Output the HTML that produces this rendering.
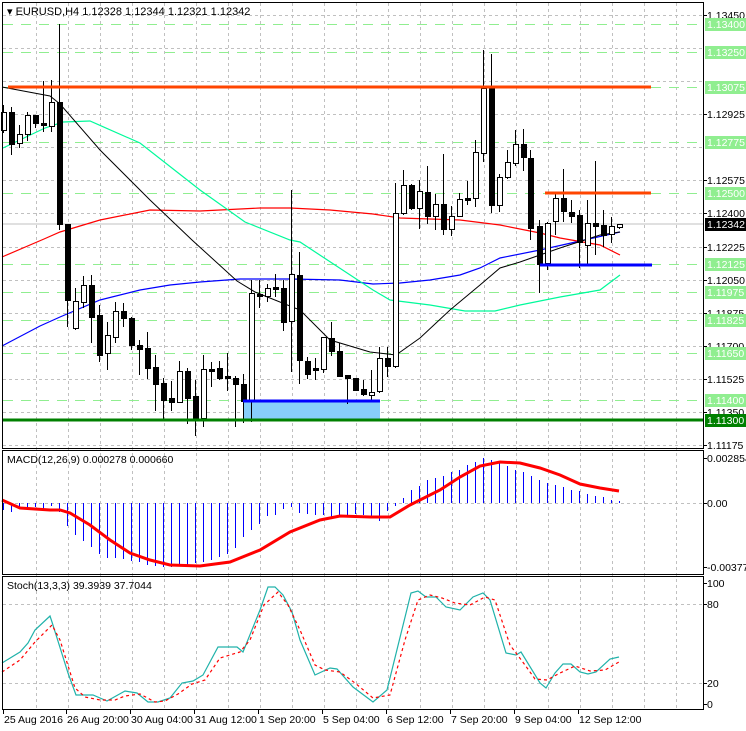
<!DOCTYPE html>
<html><head><meta charset="utf-8"><style>
html,body{margin:0;padding:0;background:#fff;width:746px;height:731px;overflow:hidden}
svg{display:block;font-family:"Liberation Sans",sans-serif;font-size:10.5px}
</style></head><body>
<svg id="s" width="746" height="731" viewBox="0 0 746 731" xmlns="http://www.w3.org/2000/svg" shape-rendering="crispEdges">
<rect width="746" height="731" fill="#fff"/>
<g id="grid" stroke="#c0c0c0" stroke-dasharray="3,3"></g>
<g id="green" stroke="#90ee90" stroke-dasharray="10,8"></g>
<line x1="3" y1="224" x2="703" y2="224" stroke="#c0c0c0"/>
<rect x="243" y="401" width="137" height="19" fill="#87cefa"/>
<g fill="none" shape-rendering="auto">
<polyline stroke="#0000ff" stroke-width="1.2" points="2,346 40,326 60,317 100,300 140,290 170,285 200,282 240,279 290,279 340,280 373,284 400,283 430,280 460,275 480,268 500,258 540,250 580,241 620,232"/>
<polyline stroke="#ff0000" stroke-width="1.2" points="2,257 44,239 60,232 100,220 150,210 200,211 260,208 290,208 330,210 373,214 400,218 460,220 500,225 540,233 560,238 600,245 620,255"/>
<polyline stroke="#00fa9a" stroke-width="1.2" points="3,148 45,128 63,122 90,121 140,143 200,190 245,222 290,240 300,242 373,290 390,300 430,305 465,311 495,311 520,305 560,297 600,290 620,275"/>
<polyline stroke="#000" stroke-width="1" points="2,87 50,96 60,104 100,150 150,200 192,240 237,281 255,292 300,310 330,340 370,352 396,355 420,338 450,310 480,285 500,268 520,262 540,255 560,248 600,235 620,232"/>
</g>
<g id="candles"></g>
<line x1="8" y1="87" x2="651" y2="87" stroke="#ff4500" stroke-width="3"/>
<line x1="545" y1="193" x2="651" y2="193" stroke="#ff4500" stroke-width="3"/>
<line x1="540" y1="265" x2="652" y2="265" stroke="#0000ff" stroke-width="3"/>
<line x1="243" y1="401" x2="380" y2="401" stroke="#0000ff" stroke-width="3"/>
<line x1="3" y1="420" x2="703" y2="420" stroke="#008000" stroke-width="3"/>
<!-- MACD -->
<g id="macd" stroke="#0000ff"></g>
<polyline fill="none" shape-rendering="auto" stroke="#ff0000" stroke-width="3" points="2,500 20,508 50,510 60,510 70,513 90,525 110,540 130,553 150,560 170,565 200,566 230,562 260,550 290,532 320,520 340,516 370,517 390,517 410,505 440,490 460,477 480,466 500,462 520,463 540,468 560,475 580,484 600,488 619,491"/>
<!-- Stoch -->
<polyline id="st" fill="none" shape-rendering="auto" stroke="#20b2aa" stroke-width="1.2" points="2,663 20,652 28,643 35,630 50,616 52,622 68,673 76,695 93,695 107,701 125,691 137,693 148,702 158,702 170,698 182,683 193,681 203,675 218,647 237,647 243,652 260,610 268,587 275,587 283,595 292,612 300,640 315,675 330,668 337,669 353,687 373,702 387,690 411,593 418,591 426,597 436,597 446,607 460,610 473,597 483,593 490,600 506,653 516,655 521,652 540,683 546,688 555,673 563,664 571,664 580,672 588,674 596,672 610,659 619,657"/>
<polyline fill="none" shape-rendering="auto" stroke="#ff0000" stroke-width="1.2" stroke-dasharray="3,3" points="2,672 20,660 35,642 52,625 60,640 75,688 85,697 100,700 115,700 125,696 140,694 155,702 165,701 178,694 192,684 205,680 220,658 240,652 250,640 264,605 278,592 288,605 300,630 315,665 325,670 340,672 355,683 373,698 390,695 405,640 418,600 430,595 442,598 455,603 470,605 485,597 495,600 510,645 525,665 535,679 547,680 560,673 575,666 590,671 605,670 619,662"/>
<!-- borders -->
<g fill="none" stroke="#000">
<rect x="2.5" y="2.5" width="701" height="446"/>
<rect x="2.5" y="450.5" width="701" height="124"/>
<rect x="2.5" y="576.5" width="701" height="133"/>
</g>
<text x="7" y="15" font-size="11">▾ EURUSD,H4  1.12328 1.12344 1.12321 1.12342</text>
<text x="7" y="463">MACD(12,26,9) 0.000278 0.000660</text>
<text x="7" y="589">Stoch(13,3,3) 39.3939 37.7044</text>
<g id="axis" font-size="10.5"></g>
</svg>
<script>
var NS="http://www.w3.org/2000/svg";
function el(p,t,a,txt){var e=document.createElementNS(NS,t);for(var k in a)e.setAttribute(k,a[k]);if(txt)e.textContent=txt;document.getElementById(p).appendChild(e);return e;}
// grid
var gy=[15,48,81,114,147,180,213,247,280,313,346,379,412,445];
gy.forEach(function(y){el("grid","line",{x1:3,y1:y+.5,x2:703,y2:y+.5});});
[503,604,683].forEach(function(y){el("grid","line",{x1:3,y1:y+.5,x2:703,y2:y+.5});});
for(var x=36;x<700;x+=32){el("grid","line",{x1:x+.5,y1:3,x2:x+.5,y2:709});}
[24,52,87,142,193,264,292,320,353,400].forEach(function(y){el("green","line",{x1:3,y1:y+.5,x2:703,y2:y+.5});});
// candles [x,top,bot,hi,lo,white]
var C=[[3,112,130,105,133,1],[11,112,144,107,155,0],[19,134,143,125,148,1],[27,115,134,112,141,1],[35,115,123,115,128,0],[43,123,125,81,132,0],[51,102,126,80,132,1],[59,102,224,24,230,0],[67,224,300,224,327,0],[75,301,328,288,330,1],[83,285,302,276,308,1],[91,285,317,275,343,0],[99,315,355,305,362,0],[107,335,353,322,370,1],[115,311,337,302,343,1],[123,311,318,303,327,0],[131,318,345,317,350,0],[139,345,349,340,375,0],[147,348,368,332,379,0],[155,367,384,355,411,0],[163,383,400,378,420,0],[171,398,402,381,411,0],[179,371,402,361,403,1],[187,371,398,368,424,0],[195,396,418,380,436,0],[203,369,418,355,427,1],[211,369,371,362,387,0],[219,368,378,361,380,0],[227,376,378,353,391,0],[235,378,384,376,427,0],[243,384,401,374,423,0],[251,293,401,280,422,1],[259,294,296,280,308,0],[267,288,296,284,302,1],[275,287,289,274,297,0],[283,288,322,280,331,0],[291,274,321,190,372,1],[299,275,360,252,384,0],[307,361,374,357,379,0],[315,368,370,358,380,0],[323,337,369,338,373,1],[331,338,351,322,356,0],[339,351,376,343,376,0],[347,375,378,376,404,0],[355,378,390,378,390,0],[363,389,394,380,396,0],[371,392,395,370,400,1],[379,358,391,347,393,1],[387,358,366,347,377,0],[395,213,366,183,368,1],[403,185,213,170,215,1],[411,185,208,184,210,0],[419,191,208,180,229,1],[427,192,216,166,224,0],[435,204,216,194,230,1],[443,204,229,154,235,0],[451,216,229,206,236,1],[459,199,216,193,217,1],[467,198,200,181,205,0],[475,152,198,140,207,1],[483,88,153,50,162,1],[491,87,205,54,213,0],[499,177,205,174,212,1],[507,162,177,150,179,1],[515,144,163,130,166,1],[523,144,157,129,171,0],[530,158,228,150,240,0],[539,226,264,220,293,0],[547,223,263,222,270,1],[555,198,221,193,235,1],[563,198,211,169,222,0],[571,212,216,200,223,0],[579,215,242,210,268,0],[587,223,245,200,265,1],[595,223,226,161,255,0],[603,225,235,210,247,0],[611,226,234,217,243,1],[619,224,227,224,229,1]];
C.forEach(function(c){
 el("candles","line",{x1:c[0]+.5,y1:c[3],x2:c[0]+.5,y2:c[4],stroke:"#000"});
 var h=Math.max(c[2]-c[1],1);
 if(c[5])el("candles","rect",{x:c[0]-2+.5,y:c[1]+.5,width:5,height:h,fill:"#fff",stroke:"#000"});
 else el("candles","rect",{x:c[0]-2,y:c[1],width:6,height:h+1,fill:"#000"});
});
// MACD hist
var M={3:510,11:512,19:507,27:509,35:507,43:509,51:506,59:512,67:526,75:535,83:541,91:547,99:554,107:558,115:558,123:559,131:561,139:562,147:565,155:566,163:567,171:567,179:565,187:566,195:563,203:562,211:560,219:557,227:554,235:548,243:537,251:530,259:524,267:516,275:515,283:509,291:507,299:513,307:514,315:515,323:515,331:517,339:517,347:515,355:514,363:515,371:518,379:521,387:511,395:506,403:498,411:490,419:486,427:480,435:478,443:476,451:472,459:470,467:465,475:462,483:458,491:460,499:463,507:466,515:470,523:472,531:476,539:480,547:483,555:485,563:487,571:490,579:491,587:494,595:496,603:497,611:500,619:501};
for(var k in M){el("macd","line",{x1:+k+.5,y1:503,x2:+k+.5,y2:M[k]});}
// axis
var A=[[15,"1.13450"],[114,"1.12925"],[180,"1.12575"],[213,"1.12400"],[247,"1.12225"],[280,"1.12050"],[313,"1.11875"],[346,"1.11700"],[379,"1.11525"],[412,"1.11350"],[445,"1.11175"],[458,"0.002854"],[503,"0.00"],[567,"-0.003772"],[583,"100"],[604,"80"],[683,"20"],[704,"0"]];
A.forEach(function(a){el("axis","line",{x1:703,y1:a[0]+.5,x2:707,y2:a[0]+.5,stroke:"#000"});el("axis","text",{x:707,y:a[0]+4},a[1]);});
var G=[[24,"1.13400"],[52,"1.13250"],[87,"1.13075"],[142,"1.12775"],[193,"1.12500"],[264,"1.12125"],[292,"1.11975"],[320,"1.11825"],[353,"1.11650"],[400,"1.11400"]];
G.forEach(function(a){el("axis","rect",{x:705,y:a[0]-6,width:41,height:13,fill:"#90ee90"});el("axis","text",{x:707,y:a[0]+4,fill:"#fff"},a[1]);});
el("axis","rect",{x:705,y:414,width:41,height:13,fill:"#008000"});el("axis","text",{x:707,y:424,fill:"#fff"},"1.11300");
el("axis","rect",{x:705,y:218,width:41,height:13,fill:"#000"});el("axis","text",{x:707,y:228,fill:"#fff"},"1.12342");
var D=[[3,"25 Aug 2016"],[66,"26 Aug 20:00"],[130,"30 Aug 04:00"],[194,"31 Aug 12:00"],[258,"1 Sep 20:00"],[322,"5 Sep 04:00"],[386,"6 Sep 12:00"],[450,"7 Sep 20:00"],[514,"9 Sep 04:00"],[578,"12 Sep 12:00"]];
D.forEach(function(d){el("axis","line",{x1:d[0]+.5,y1:709,x2:d[0]+.5,y2:714,stroke:"#000"});el("axis","text",{x:d[0]+1,y:723},d[1]);});
</script>
</body></html>
